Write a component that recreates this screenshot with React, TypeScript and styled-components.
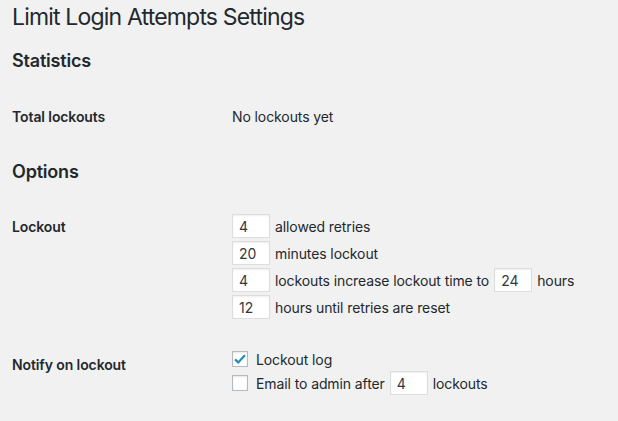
import React from 'react';
import styled, {createGlobalStyle} from 'styled-components';

const GlobalStyle = createGlobalStyle`
  body {
    margin: 0;
    background: #f1f1f1;
    color: #23282d;
    font-family: Inter, "Liberation Sans", Arial, sans-serif;
    font-size: 14px;
    letter-spacing: -0.1px;
  }
`;

const Page = styled.div`
  padding: 2px 12px 20px;
`;

const Title = styled.h1`
  margin: 0;
  font-size: 23px;
  font-weight: 400;
  line-height: 30px;
  letter-spacing: -0.82px;
`;

const SectionTitle = styled.h2<{ $top: number }>`
  margin: ${p => p.$top}px 0 0;
  font-size: 18px;
  font-weight: 600;
  line-height: 24px;
  letter-spacing: -0.2px;
`;

const FormRow = styled.div<{ $top: number }>`
  display: grid;
  grid-template-columns: 220px 1fr;
  margin-top: ${p => p.$top}px;
`;

const Label = styled.div<{ $pad?: number }>`
  font-weight: 600;
  line-height: 20px;
  padding-top: ${p => p.$pad ?? 0}px;
`;

const Value = styled.div`
  line-height: 20px;
`;

const Fields = styled.div<{ $gap: number }>`
  display: flex;
  flex-direction: column;
  gap: ${p => p.$gap}px;
`;

const Line = styled.div<{ $h?: number }>`
  display: flex;
  align-items: center;
  gap: 5px;
  height: ${p => p.$h ?? 24}px;
`;

const NumberBox = styled.input`
  box-sizing: border-box;
  width: 38px;
  height: 24px;
  margin: 0;
  padding: 0 6px;
  border: 1px solid #ddd;
  background: #fff;
  box-shadow: inset 0 1px 2px rgba(0, 0, 0, 0.07);
  color: #32373c;
  font: inherit;
  font-size: 14px;
  outline: none;
`;

const CheckLine = styled.label<{ $h?: number }>`
  display: flex;
  align-items: center;
  height: ${p => p.$h ?? 20}px;
  gap: 5px;
`;

const Check = styled.span`
  box-sizing: border-box;
  width: 16px;
  height: 16px;
  margin-right: 3px;
  border: 1px solid #b4b9be;
  background: #fff;
  box-shadow: inset 0 1px 2px rgba(0, 0, 0, 0.1);
  display: flex;
  align-items: center;
  justify-content: center;
`;

const Tick = () => (
    <svg width="14" height="14" viewBox="0 0 20 20">
        <path d="M3 10.5 L7.5 15 L17 4.5" fill="none" stroke="#1e8cbe" strokeWidth="3.2" strokeLinejoin="miter"/>
    </svg>
);

const Checkbox: React.FC<{ checked?: boolean }> = ({checked}) => (
    <Check>{checked && <Tick/>}</Check>
);

export default function App() {
    return (
        <>
            <GlobalStyle/>
            <Page>
                <Title>Limit Login Attempts Settings</Title>

                <SectionTitle $top={17}>Statistics</SectionTitle>
                <FormRow $top={34}>
                    <Label>Total lockouts</Label>
                    <Value>No lockouts yet</Value>
                </FormRow>

                <SectionTitle $top={33}>Options</SectionTitle>
                <FormRow $top={30}>
                    <Label $pad={3}>Lockout</Label>
                    <Fields $gap={3}>
                        <Line>
                            <NumberBox defaultValue="4"/>
                            <span>allowed retries</span>
                        </Line>
                        <Line>
                            <NumberBox defaultValue="20"/>
                            <span>minutes lockout</span>
                        </Line>
                        <Line>
                            <NumberBox defaultValue="4"/>
                            <span>lockouts increase lockout time to</span>
                            <NumberBox defaultValue="24"/>
                            <span>hours</span>
                        </Line>
                        <Line>
                            <NumberBox defaultValue="12"/>
                            <span>hours until retries are reset</span>
                        </Line>
                    </Fields>
                </FormRow>

                <FormRow $top={30}>
                    <Label $pad={6}>Notify on lockout</Label>
                    <Fields $gap={1}>
                        <CheckLine>
                            <Checkbox checked/>
                            <span>Lockout log</span>
                        </CheckLine>
                        <CheckLine $h={26}>
                            <Checkbox/>
                            <span>Email to admin after</span>
                            <NumberBox defaultValue="4"/>
                            <span>lockouts</span>
                        </CheckLine>
                    </Fields>
                </FormRow>
            </Page>
        </>
    );
}
